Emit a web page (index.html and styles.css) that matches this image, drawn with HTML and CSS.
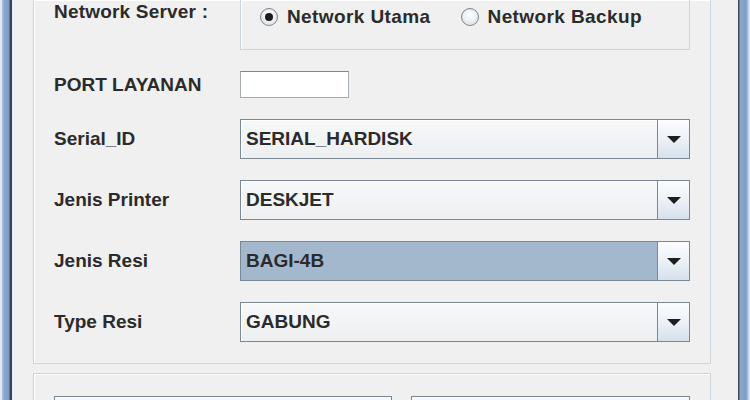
FILE: index.html
```html
<!DOCTYPE html>
<html>
<head>
<meta charset="utf-8">
<link rel="stylesheet" href="styles.css">
</head>
<body>
<div class="window">
  <div class="frame frame-left"></div>
  <div class="content">
    <div class="panel panel-main">
      <div class="form">
        <div class="label label-top">Network Server :</div>
        <div class="group">
          <div class="radio"><span class="dot checked"></span><span class="radio-text">Network Utama</span></div>
          <div class="radio"><span class="dot"></span><span class="radio-text">Network Backup</span></div>
        </div>

        <div class="label">PORT LAYANAN</div>
        <div class="cell"><div class="textfield"></div></div>

        <div class="label">Serial_ID</div>
        <div class="combo"><div class="combo-value">SERIAL_HARDISK</div><div class="combo-btn"><span class="arrow"></span></div></div>

        <div class="label">Jenis Printer</div>
        <div class="combo"><div class="combo-value">DESKJET</div><div class="combo-btn"><span class="arrow"></span></div></div>

        <div class="label">Jenis Resi</div>
        <div class="combo"><div class="combo-value selected">BAGI-4B</div><div class="combo-btn"><span class="arrow"></span></div></div>

        <div class="label">Type Resi</div>
        <div class="combo"><div class="combo-value">GABUNG</div><div class="combo-btn"><span class="arrow"></span></div></div>
      </div>
    </div>
    <div class="panel panel-buttons">
      <div class="box box-wide"></div>
      <div class="box box-narrow"></div>
    </div>
  </div>
  <div class="frame frame-right"></div>
</div>
</body>
</html>
```
FILE: styles.css
```css
* { box-sizing: border-box; }
html, body {
  margin: 0;
  padding: 0;
  width: 750px;
  height: 400px;
  overflow: hidden;
  background: #f0f0f0;
}
body {
  font-family: "Liberation Sans", Arial, sans-serif;
  font-weight: bold;
  font-size: 19px;
  color: #2b2b2b;
}
.window {
  display: flex;
  height: 400px;
  overflow: hidden;
}
.frame {
  height: 400px;
  flex: none;
}
.frame-left {
  width: 13px;
  background:
    linear-gradient(to right, #dfe8f3 0, #dfe8f3 2px, #b3c7e0 2px, #8aa7cc 4px, #7d9cc6 9px, #3b4656 10px, #3b4656 12px, #e8ecf0 12px, #e8ecf0 13px);
}
.frame-right {
  width: 12px;
  background:
    linear-gradient(to right, #3e4a5a 0, #3e4a5a 1px, #8ea9cf 2px, #7f9dc8 8px, #aac1de 10px, #dfe8f3 11px);
}
.content {
  width: 725px;
  flex: none;
}
.panel {
  border: 1px solid #cdd5dc;
  box-shadow: inset 1px 1px 0 #ffffff;
}
.panel-main {
  margin-left: 20px;
  width: 678px;
  border-top: none;
  padding: 0 20px 21px 20px;
}
.form {
  display: grid;
  grid-template-columns: 186px 450px;
  grid-template-rows: 50px 27px 40px 40px 40px 40px;
  row-gap: 21px;
}
.label {
  align-self: center;
  line-height: 24px;
  white-space: nowrap;
}
.label-top {
  align-self: start;
  letter-spacing: 0.2px;
}
.group {
  border: 1px solid #cdd5dc;
  border-top: none;
  box-shadow: inset 1px 0 0 #ffffff;
  display: flex;
  gap: 30px;
  padding: 5px 0 0 19px;
  align-items: flex-start;
}
.radio {
  display: flex;
  align-items: center;
  height: 24px;
  gap: 9px;
}
.radio-text { line-height: 24px; letter-spacing: 0.4px; }
.dot {
  width: 18px;
  height: 18px;
  border-radius: 50%;
  border: 1px solid #7f858c;
  background: radial-gradient(circle at 50% 40%, #ffffff 0, #eef1f5 45%, #cfd7e0 100%);
  box-shadow: inset 0 0 0 1px #e6e9ed;
  position: relative;
  flex: none;
}
.dot.checked::after {
  content: "";
  position: absolute;
  left: 4px;
  top: 4px;
  width: 8px;
  height: 8px;
  border-radius: 50%;
  background: #1c1c1c;
}
.cell { display: flex; align-items: stretch; }
.textfield {
  width: 109px;
  height: 27px;
  background: #ffffff;
  border: 1px solid #a4abb3;
  border-top-color: #7e868f;
}
.combo {
  display: flex;
  border: 1px solid #7a8794;
  height: 40px;
}
.combo-value {
  flex: 1;
  padding-left: 5px;
  line-height: 38px;
  background: linear-gradient(#f7f8f9, #eeeff0);
  box-shadow: inset 1px 1px 0 #ffffff;
}
.combo-value.selected {
  background: #a4b8cd;
  box-shadow: none;
}
.combo-btn {
  width: 32px;
  flex: none;
  border-left: 1px solid #7a8794;
  background: linear-gradient(#fbfcfe 0, #eef3f8 45%, #d6e1ec 100%);
  display: flex;
  align-items: center;
  justify-content: center;
}
.arrow {
  width: 0;
  height: 0;
  border-left: 7px solid transparent;
  border-right: 7px solid transparent;
  border-top: 7px solid #1e1e1e;
}
.panel-buttons {
  margin: 9px 0 0 20px;
  width: 678px;
  height: 27px;
  border-bottom: none;
  overflow: hidden;
  padding: 22px 20px 0 20px;
  display: flex;
  align-items: flex-start;
  gap: 19px;
}
.box {
  flex: none;
  height: 40px;
  border: 1px solid #7a8794;
  background: linear-gradient(#f7f8f9, #eeeff0);
}
.box-wide { width: 338px; }
.box-narrow { width: 279px; }
```
